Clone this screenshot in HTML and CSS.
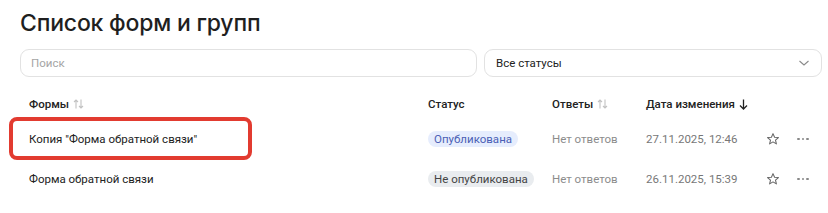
FILE: index.html
```html
<!DOCTYPE html>
<html lang="ru">
<head>
<meta charset="utf-8">
<link rel="stylesheet" href="styles.css">
</head>
<body>
<div class="page">
  <h1 class="title">Список форм и групп</h1>
  <div class="filters">
    <div class="field search"><span class="placeholder">Поиск</span></div>
    <div class="field select">
      <span class="value">Все статусы</span>
      <svg class="chev" width="12" height="8" viewBox="0 0 12 8"><path d="M1.5 2 L6 6 L10.5 2" fill="none" stroke="#8a8a8a" stroke-width="1.1"/></svg>
    </div>
  </div>
  <div class="table">
    <div class="row head">
      <div class="cell">Формы <svg class="sort" width="11" height="10" viewBox="0 0 11 10"><path d="M3 9.5 V1 M1 3 L3 1 L5 3 M8 0.5 V9 M6 7 L8 9 L10 7" fill="none" stroke="#c2c2c2" stroke-width="1.1"/></svg></div>
      <div class="cell">Статус</div>
      <div class="cell">Ответы <svg class="sort" width="11" height="10" viewBox="0 0 11 10"><path d="M3 9.5 V1 M1 3 L3 1 L5 3 M8 0.5 V9 M6 7 L8 9 L10 7" fill="none" stroke="#c2c2c2" stroke-width="1.1"/></svg></div>
      <div class="cell">Дата изменения <svg class="sort" width="9" height="11" viewBox="0 0 9 11"><path d="M4.5 0.5 V10 M1 6.5 L4.5 10 L8 6.5" fill="none" stroke="#222" stroke-width="1.3"/></svg></div>
      <div class="cell"></div>
      <div class="cell"></div>
    </div>
    <div class="row item">
      <div class="mark"></div>
      <div class="cell name">Копия "Форма обратной связи"</div>
      <div class="cell"><span class="badge pub">Опубликована</span></div>
      <div class="cell muted">Нет ответов</div>
      <div class="cell date">27.11.2025, 12:46</div>
      <div class="cell icon"><svg width="14" height="14" viewBox="0 0 24 24"><path d="M12 2.8 L14.7 8.9 L21.3 9.5 L16.3 13.9 L17.8 20.4 L12 17 L6.2 20.4 L7.7 13.9 L2.7 9.5 L9.3 8.9 Z" fill="none" stroke="#666" stroke-width="1.8" stroke-linejoin="round"/></svg></div>
      <div class="cell icon"><span class="dots"><i></i><i></i><i></i></span></div>
    </div>
    <div class="row item">
      <div class="cell name">Форма обратной связи</div>
      <div class="cell"><span class="badge unpub">Не опубликована</span></div>
      <div class="cell muted">Нет ответов</div>
      <div class="cell date">26.11.2025, 15:39</div>
      <div class="cell icon"><svg width="14" height="14" viewBox="0 0 24 24"><path d="M12 2.8 L14.7 8.9 L21.3 9.5 L16.3 13.9 L17.8 20.4 L12 17 L6.2 20.4 L7.7 13.9 L2.7 9.5 L9.3 8.9 Z" fill="none" stroke="#666" stroke-width="1.8" stroke-linejoin="round"/></svg></div>
      <div class="cell icon"><span class="dots"><i></i><i></i><i></i></span></div>
    </div>
  </div>
</div>
</body>
</html>
```
FILE: styles.css
```css
* { box-sizing: border-box; }
html, body { margin: 0; padding: 0; background: #fff; }
body { font-family: Roboto, "Noto Sans", sans-serif; color: #222; }
.page { padding: 9px 6px 0 20px; width: 828px; }
.title { margin: 0; font-family: Inter, "Noto Sans", sans-serif; font-size: 23px; font-weight: 500; line-height: 28px; color: #1f1f1f; letter-spacing: -0.2px; }
.filters { display: grid; grid-template-columns: 457px 1fr; gap: 7px; margin-top: 12px; }
.field { height: 28px; border: 1px solid #e2e2e2; border-radius: 9px; display: flex; align-items: center; padding: 0 10px; font-size: 11.5px; }
.placeholder { color: #a5a5a5; }
.select { justify-content: space-between; padding: 0 11px 0 11px; }
.value { color: #222; }
.chev { display: block; }
.table { margin-top: 12px; }
.row { display: grid; grid-template-columns: 399px 124px 94px 1fr 30px 30px; padding: 0 4px 0 9px; align-items: center; position: relative; }
.cell { display: flex; align-items: center; }
.head { height: 30px; font-size: 11.5px; font-weight: 500; color: #222; }
.item { height: 40px; font-size: 11.5px; }
.sort { display: block; margin-left: 4px; }
.name { color: #222; }
.muted { color: #8c8c8c; }
.date { color: #777; }
.icon { justify-content: center; }
.badge { display: inline-block; height: 16px; line-height: 16px; padding: 0 6px; border-radius: 8px; font-size: 11.5px; }
.pub { background: #e6edfd; color: #4b5fb5; }
.unpub { background: #e9ecef; color: #444; }
.dots { display: flex; gap: 2px; }
.dots i { display: block; width: 2.5px; height: 2.5px; border-radius: 50%; background: #888; }
.mark { position: absolute; left: -11px; top: -2px; width: 243px; height: 43px; border: 4px solid #e23b30; border-radius: 8px; pointer-events: none; }
```
